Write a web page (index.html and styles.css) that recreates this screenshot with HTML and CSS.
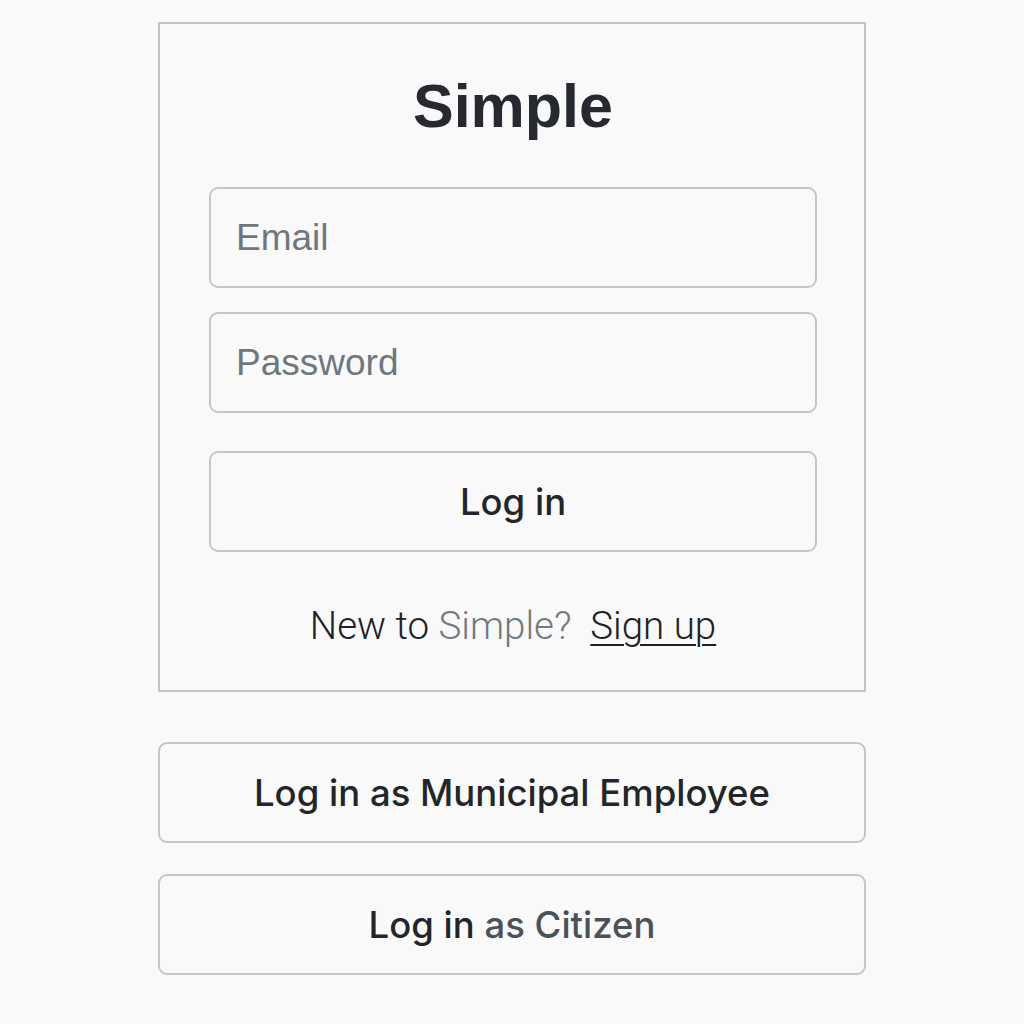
FILE: index.html
```html
<!DOCTYPE html>
<html lang="en">
<head>
<meta charset="utf-8">
<title>Simple</title>
<link rel="stylesheet" href="styles.css">
</head>
<body>
<main class="page">
  <section class="card">
    <h1 class="title">Simple</h1>
    <form class="form">
      <input class="field" type="email" placeholder="Email">
      <input class="field" type="password" placeholder="Password">
      <button class="btn btn-primary" type="button">Log in</button>
    </form>
    <p class="signup">New to <span class="muted">Simple?</span>&nbsp; <a class="link" href="#">Sign up</a></p>
  </section>
  <button class="btn btn-alt" type="button">Log in as Municipal Employee</button>
  <button class="btn btn-alt" type="button">Log in <span class="soft">as Citizen</span></button>
</main>
</body>
</html>
```
FILE: styles.css
```css
* { box-sizing: border-box; }
html, body { margin: 0; padding: 0; }
body {
  background: #f9f9f9;
  font-family: "Inter", "Liberation Sans", sans-serif;
  color: #24272b;
}
.page {
  width: 708px;
  margin-left: 158px;
  padding-top: 22px;
  display: flex;
  flex-direction: column;
}
.card {
  border: 2px solid #c3c3c3;
  padding: 0 47px 42px 49px;
  display: flex;
  flex-direction: column;
  align-items: stretch;
}
.title {
  margin: 47px 0 0;
  height: 116px;
  font-family: "Liberation Sans", Arial, sans-serif;
  font-weight: bold;
  font-size: 61px;
  line-height: 70px;
  text-align: center;
  color: #26292d;
}
.form {
  display: flex;
  flex-direction: column;
}
.field {
  height: 101px;
  border: 2px solid #c6c6c6;
  border-radius: 9px;
  background: #f9f9f9;
  padding: 0 25px;
  font-family: "Liberation Sans", Arial, sans-serif;
  font-size: 37px;
  color: #24272b;
  outline: none;
}
.field + .field { margin-top: 24px; }
.field::placeholder { color: #6f777e; }
.btn {
  height: 101px;
  border: 2px solid #c6c6c6;
  border-radius: 9px;
  background: #f9f9f9;
  font-family: "Inter", "Liberation Sans", sans-serif;
  font-weight: 500;
  font-size: 36.5px;
  color: #22262a;
  cursor: pointer;
}
.btn-primary { margin-top: 38px; }
.signup {
  margin: 52px 0 0;
  text-align: center;
  font-family: "Roboto", "Liberation Sans", sans-serif;
  font-weight: 300;
  font-size: 38.5px;
  line-height: 44px;
  color: #1e2125;
}
.muted { color: #727a81; }
.link {
  color: #1e2125;
  text-decoration: underline;
  text-decoration-thickness: 2px;
  text-underline-offset: 5px;
}
.btn-alt { margin-top: 50px; }
.btn-alt + .btn-alt { margin-top: 31px; }
.soft { color: #4b5159; }
```
